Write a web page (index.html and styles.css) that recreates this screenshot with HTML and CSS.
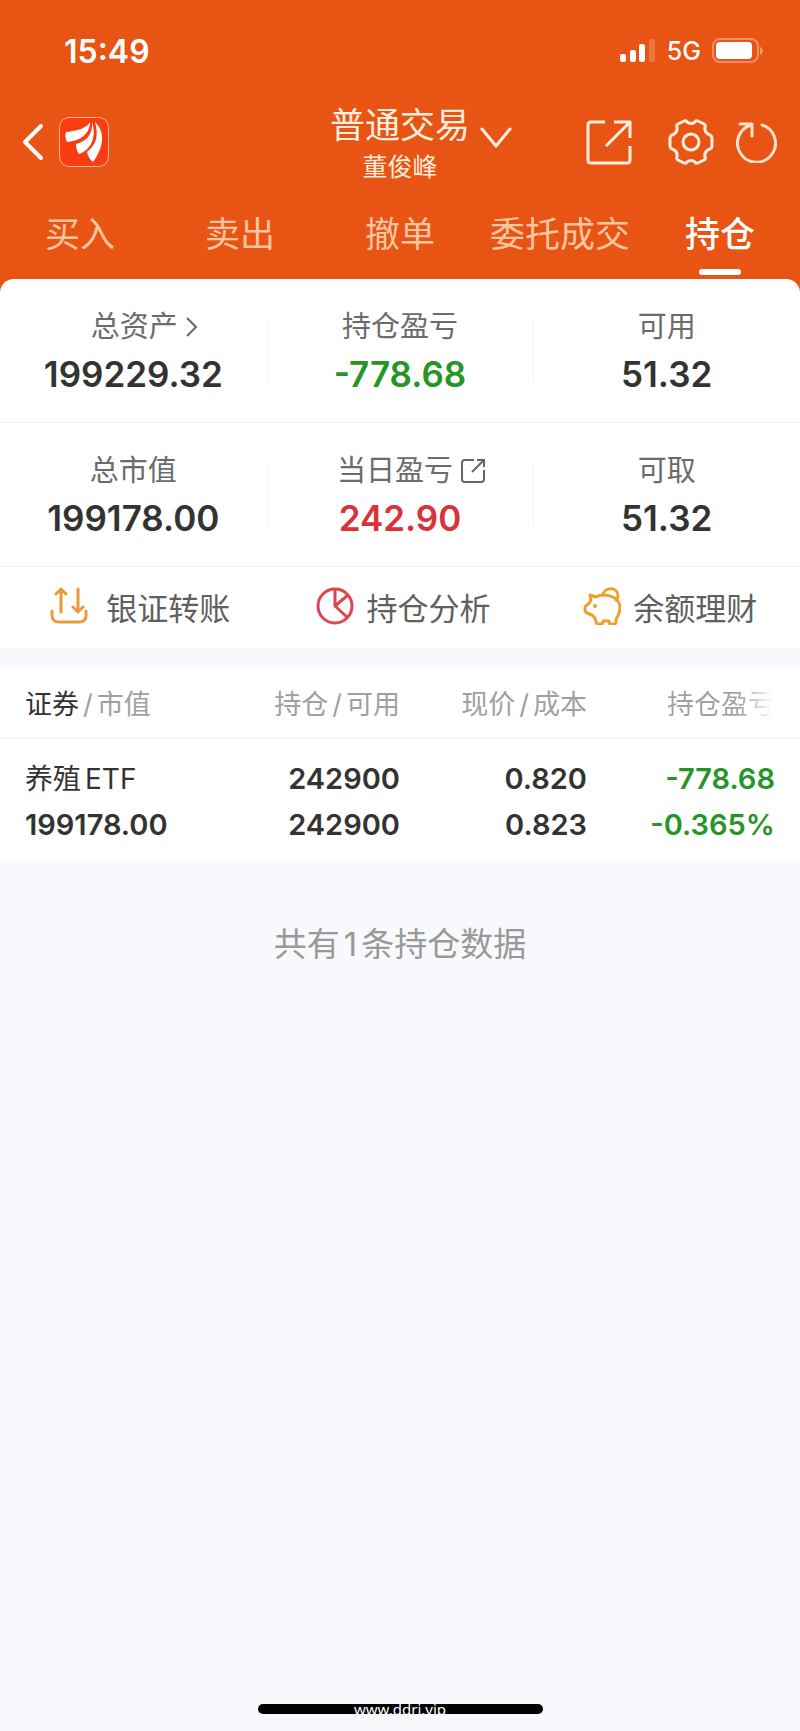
FILE: index.html
```html
<!DOCTYPE html>
<html lang="zh-CN">
<head>
    <meta charset="UTF-8">
    <meta name="viewport" content="width=device-width, initial-scale=1.0">
    <title>普通交易 - 持仓</title>
    <link rel="stylesheet" href="styles.css">
</head>
<body>
    <!-- 顶部 -->
    <header class="header">
        <div class="status-bar">
            <span class="time">15:49</span>
            <div class="status-icons">
                <svg class="signal" width="36" height="24" viewBox="0 0 36 24" fill="#fff">
                    <rect x="0" y="15" width="6" height="8" rx="2"/>
                    <rect x="10" y="11" width="6" height="12" rx="2"/>
                    <rect x="19" y="5" width="6" height="18" rx="2"/>
                    <rect x="29" y="0" width="6" height="23" rx="2" opacity="0.2"/>
                </svg>
                <span class="network">5G</span>
                <svg class="battery" width="52" height="26" viewBox="0 0 52 26" fill="none">
                    <rect x="1" y="1" width="45" height="23" rx="7" stroke="#fff" stroke-width="2" opacity="0.35"/>
                    <rect x="4" y="4" width="36" height="17" rx="4" fill="#fff"/>
                    <path d="M48 9c4 1.500 4 6.500 0 8z" fill="#fff" opacity="0.4"/>
                </svg>
            </div>
        </div>

        <div class="nav">
            <div class="nav-left">
                <button class="icon-btn" aria-label="返回">
                    <svg width="22" height="38" viewBox="0 0 22 38" fill="none" stroke="#fff" stroke-width="4" stroke-linecap="round" stroke-linejoin="round">
                        <path d="M19 3L3 19l16 16"/>
                    </svg>
                </button>
                <svg class="logo" width="50" height="50" viewBox="0 0 50 50">
                    <rect x="0.500" y="0.500" width="49" height="49" rx="10" fill="#fb3c10" stroke="#ffb39a"/>
                    <g fill="#fff">
                        <path d="M31 5C28 11 18 14 7 15c-1 3-1 7 1 10C21 24 31 17 31 5z"/>
                        <path d="M33 5c1 12-5 19-16 22 0 4 1 7 3 10 12-4 18-17 13-32z"/>
                        <path d="M36 5c4 14 1 23-8 30 1 4 3 8 6 10 9-12 14-29 2-40z"/>
                    </g>
                </svg>
            </div>
            <div class="nav-title">
                <h1>普通交易</h1>
                <p>董俊峰</p>
                <svg class="nav-arrow" width="32" height="22" viewBox="0 0 32 22" fill="none" stroke="#ffeede" stroke-width="3" stroke-linecap="round" stroke-linejoin="round">
                    <path d="M2 2l14 17L30 2"/>
                </svg>
            </div>
            <div class="nav-right">
                <button class="icon-btn" aria-label="分享">
                    <svg width="46" height="46" viewBox="0 0 46 46" fill="none" stroke="#ffeede" stroke-width="3" stroke-linejoin="round">
                        <path d="M19 3H5Q2 3 2 6v35q0 3 3 3h36q3 0 3-3V27M28 3h16v16M43 4L20 27"/>
                    </svg>
                </button>
                <button class="icon-btn gear" aria-label="设置">
                    <svg width="46" height="46" viewBox="0 0 46 46" fill="none" stroke="#ffeede" stroke-width="3" stroke-linejoin="round">
                        <path d="M16 2q2-1 3 1 4 3 8 0 1-2 3-1l6 3q2 1 1 3-1 6 5 8 2 1 2 3v8q0 2-2 3-6 2-5 8 1 2-1 3l-6 3q-2 1-3-1-4-3-8 0-1 2-3 1l-6-3q-2-1-1-3 1-6-5-8-2-1-2-3v-8q0-2 2-3 6-2 5-8-1-2 1-3z"/>
                        <circle cx="23" cy="23" r="8"/>
                    </svg>
                </button>
                <button class="icon-btn" aria-label="刷新">
                    <svg width="42" height="42" viewBox="0 0 42 42" fill="none" stroke="#ffe0c8" stroke-width="3" stroke-linecap="round" stroke-linejoin="round">
                        <path d="M26 4a19 19 0 1 1-11 0M4 3h12v12"/>
                    </svg>
                </button>
            </div>
        </div>

        <nav class="tabs">
            <a href="#">买入</a>
            <a href="#">卖出</a>
            <a href="#">撤单</a>
            <a href="#">委托成交</a>
            <a href="#" class="active">持仓</a>
        </nav>
    </header>

    <!-- 资产 -->
    <section class="panel">
        <div class="stats">
            <div class="stat">
                <span class="label with-icon">总资产
                    <svg width="12" height="20" viewBox="0 0 12 20" fill="none" stroke="#666" stroke-width="2">
                        <path d="M1 1l9 9-9 9"/>
                    </svg>
                </span>
                <span class="value">199229.32</span>
            </div>
            <div class="stat">
                <span class="label">持仓盈亏</span>
                <span class="value green">-778.68</span>
            </div>
            <div class="stat">
                <span class="label">可用</span>
                <span class="value">51.32</span>
            </div>
        </div>
        <div class="stats">
            <div class="stat">
                <span class="label">总市值</span>
                <span class="value">199178.00</span>
            </div>
            <div class="stat">
                <span class="label with-icon">当日盈亏
                    <svg width="24" height="24" viewBox="0 0 24 24" fill="none" stroke="#666" stroke-width="2">
                        <path d="M13 1H4Q1 1 1 4v16q0 3 3 3h16q3 0 3-3v-9M16 1h7v7M22 2L11 13"/>
                    </svg>
                </span>
                <span class="value red">242.90</span>
            </div>
            <div class="stat">
                <span class="label">可取</span>
                <span class="value">51.32</span>
            </div>
        </div>
        <div class="actions">
            <button class="action wide">
                <svg width="38" height="38" viewBox="0 0 38 38" fill="none" stroke="#e79c3c" stroke-width="3" stroke-linecap="round" stroke-linejoin="round">
                    <path d="M2 24v4q0 7 7 7h20q7 0 7-7v-4M11 25V3M6 7l5-5 5 5M28 2v23M23 20l5 5 5-5"/>
                </svg>
                银证转账
            </button>
            <button class="action">
                <svg width="38" height="38" viewBox="0 0 38 38" fill="none" stroke="#dc4650" stroke-width="3" stroke-linejoin="round">
                    <circle cx="19" cy="19" r="17"/>
                    <path d="M19 2v17L32 8M19 19l13 12"/>
                </svg>
                持仓分析
            </button>
            <button class="action">
                <svg width="38" height="38" viewBox="0 0 38 38" fill="none" stroke="#eda02e" stroke-width="3" stroke-linecap="round" stroke-linejoin="round">
                    <path d="M7 8l6 2q3-2 7-2c10 0 17 5 17 13 0 5-2 8-4 11v3q0 2-2 2h-3q-2 0-2-3h-6q0 3-2 3h-3q-2 0-2-3-1-4-4-6l-5-2q-2-1-2-3v-2q0-2 2-3 3-2 4-5z"/>
                    <path d="M20 8c1-8 15-9 15 1q0 2-2 4"/>
                    <circle cx="12" cy="19" r="2" fill="#eda02e" stroke="none"/>
                </svg>
                余额理财
            </button>
        </div>
    </section>

    <!-- 持仓列表 -->
    <section class="holdings">
        <table>
            <thead>
                <tr>
                    <th><b>证券</b><i>/</i>市值</th>
                    <th>持仓<i>/</i>可用</th>
                    <th>现价<i>/</i>成本</th>
                    <th><span class="fade">持仓盈亏</span></th>
                </tr>
            </thead>
            <tbody>
                <tr>
                    <td><span class="name">养殖<i>ETF</i></span><br>199178.00</td>
                    <td>242900<br>242900</td>
                    <td>0.820<br>0.823</td>
                    <td class="green">-778.68<br>-0.365%</td>
                </tr>
            </tbody>
        </table>
    </section>

    <p class="total">共有<i>1</i>条持仓数据</p>

    <footer class="footer">
        <div class="home-bar">www.ddrj.vip</div>
    </footer>
</body>
</html>
```
FILE: styles.css
```css
* {
    box-sizing: border-box;
}

body {
    font-family: 'Inter', 'Noto Sans CJK SC', sans-serif;
    margin: 0;
    min-height: 100vh;
    display: flex;
    flex-direction: column;
    color: #333;
    background: #f7f9fc;
}

h1, p {
    margin: 0;
    font-weight: 400;
}

button {
    font: inherit;
    color: inherit;
    background: none;
    border: none;
    padding: 0;
    cursor: pointer;
}

svg {
    display: block;
    flex: none;
}

/* 中文之间的字母、数字和斜杠 */
i {
    margin: 0 4px;
    font-style: normal;
}

/* 顶部 */
.header {
    background: #e85413;
    color: #fff;
    padding-bottom: 16px;
}

.status-bar {
    display: flex;
    justify-content: space-between;
    align-items: center;
    height: 102px;
    padding: 0 36px 0 64px;
}

.time {
    font-size: 32px;
    font-weight: 600;
}

.status-icons {
    display: flex;
    align-items: center;
    gap: 11px;
}

.network {
    font-size: 25px;
    font-weight: 500;
}

/* 导航 */
.nav {
    display: grid;
    grid-template-columns: 1fr auto 1fr;
    align-items: center;
    height: 78px;
    padding: 0 22px;
}

.nav-left,
.nav-right {
    display: flex;
    align-items: center;
    padding-bottom: 4px;
}

.nav-left {
    gap: 15px;
}

.nav-right {
    justify-content: flex-end;
    gap: 22px;
}

.gear {
    margin-left: 14px;
}

.nav-title {
    position: relative;
    text-align: center;
    color: #ffeede;
}

.nav-title h1 {
    font-size: 35px;
    line-height: 46px;
}

.nav-title p {
    font-size: 25px;
    line-height: 38px;
}

.nav-arrow {
    position: absolute;
    left: 100%;
    top: 25px;
    margin-left: 10px;
}

/* 标签 */
.tabs {
    display: grid;
    grid-template-columns: repeat(5, 1fr);
    height: 97px;
}

.tabs a {
    display: flex;
    flex-direction: column;
    align-items: center;
    padding-top: 30px;
    font-size: 35px;
    line-height: 48px;
    color: #fcc5a2;
    text-decoration: none;
    white-space: nowrap;
}

.tabs .active {
    font-weight: 500;
    color: #fff;
}

.tabs .active::after {
    content: '';
    width: 42px;
    height: 6px;
    margin-top: 11px;
    border-radius: 3px;
    background: #fff;
}

/* 资产面板 */
.panel {
    margin-top: -14px;
    border-radius: 14px 14px 0 0;
    background: #fff;
}

.stats {
    display: grid;
    grid-template-columns: repeat(3, 1fr);
    padding: 27px 0 25px;
    border-bottom: 1px solid #f0f1f2;
}

.stat {
    display: flex;
    flex-direction: column;
    align-items: center;
    height: 91px;
}

.stat + .stat {
    background: linear-gradient(#f4f4f4, #f4f4f4) 0 14px / 1px 62px no-repeat;
}

.label {
    display: flex;
    align-items: center;
    gap: 8px;
    font-size: 29px;
    line-height: 42px;
    color: #6b6b6b;
}

.with-icon {
    padding-left: 22px;
}

.value {
    font-size: 35px;
    line-height: 52px;
    font-weight: 600;
}

.green {
    color: #259625;
}

.red {
    color: #d93238;
}

/* 快捷入口 */
.actions {
    display: grid;
    grid-template-columns: repeat(3, 1fr);
    height: 81px;
}

.action {
    display: flex;
    justify-content: center;
    align-items: center;
    gap: 12px;
    padding: 0 0 3px 7px;
    font-size: 31px;
    color: #606060;
}

.wide {
    gap: 18px;
    padding-left: 14px;
}

/* 持仓列表 */
.holdings {
    margin-top: 20px;
    background: #fff;
}

table {
    width: 100%;
    table-layout: fixed;
    border-collapse: collapse;
}

th {
    height: 70px;
    padding: 0;
    border-bottom: 2px solid #f2f3f5;
    font-size: 27px;
    font-weight: 400;
    color: #a0a0a0;
    text-align: right;
}

th:first-child,
td:first-child {
    width: 27%;
    padding-left: 25px;
    text-align: left;
}

th:nth-child(3),
td:nth-child(3) {
    width: 187px;
}

th:last-child,
td:last-child {
    width: 213px;
    padding-right: 25px;
}

th b {
    font-weight: 400;
    color: #333;
}

.fade {
    background: linear-gradient(90deg, #a0a0a0 65%, #fff 98%);
    background-clip: text;
    -webkit-background-clip: text;
    color: transparent;
}

td {
    padding: 17px 0 13px;
    font-size: 29px;
    line-height: 46px;
    font-weight: 600;
    text-align: right;
}

.name {
    font-size: 28px;
    font-weight: 400;
}

.total {
    margin-top: 60px;
    font-size: 33px;
    line-height: 46px;
    color: #999;
    text-align: center;
}

/* 底部 */
.footer {
    margin-top: auto;
    padding: 20px 0 17px;
}

.home-bar {
    width: 285px;
    height: 10px;
    margin: 0 auto;
    border-radius: 5px;
    background: #000;
    color: #fff;
    font-family: 'Noto Sans', sans-serif;
    font-size: 15px;
    line-height: 10px;
    text-align: center;
}
```
